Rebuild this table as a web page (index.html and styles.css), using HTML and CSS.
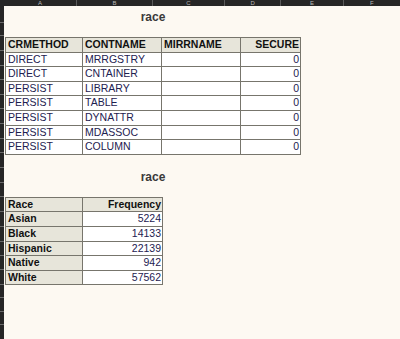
FILE: index.html
```html
<!DOCTYPE html>
<html>
<head>
<meta charset="utf-8">
<link rel="stylesheet" href="styles.css">
</head>
<body>
<div class="sheet">
  <div class="corner"></div>
  <div class="colhead">
    <div class="col ca"><span>A</span></div>
    <div class="col cb"><span>B</span></div>
    <div class="col cc"><span>C</span></div>
    <div class="col cd"><span>D</span></div>
    <div class="col ce"><span>E</span></div>
    <div class="col cf"><span>F</span></div>
  </div>
  <div class="rowhead">
    <div class="r" style="height:16px"></div>
    <div class="r" style="height:12px"></div>
    <div class="r" style="height:14px"></div>
    <div class="r" style="height:14px"></div>
    <div class="r" style="height:13px"></div>
    <div class="r" style="height:14px"></div>
    <div class="r" style="height:13px"></div>
    <div class="r" style="height:14px"></div>
    <div class="r" style="height:14px"></div>
    <div class="r" style="height:13px"></div>
    <div class="r" style="height:14px"></div>
    <div class="r" style="height:14px"></div>
    <div class="r" style="height:13px"></div>
    <div class="r" style="height:14px"></div>
    <div class="r" style="height:14px"></div>
    <div class="r" style="height:14px"></div>
    <div class="r" style="height:13px"></div>
    <div class="r" style="height:13px"></div>
    <div class="r" style="height:14px"></div>
    <div class="r" style="height:12px"></div>
    <div class="r" style="height:13px"></div>
    <div class="r" style="height:12px"></div>
    <div class="r" style="height:14px"></div>
  </div>
  <div class="content">
    <div class="block first">
      <div class="title">race</div>
      <table class="t1">
        <colgroup><col style="width:77px"><col style="width:79px"><col style="width:79px"><col style="width:60px"></colgroup>
        <tr class="hdr"><th>CRMETHOD</th><th>CONTNAME</th><th>MIRRNAME</th><th class="num">SECURE</th></tr>
        <tr><td>DIRECT</td><td>MRRGSTRY</td><td></td><td class="num">0</td></tr>
        <tr><td>DIRECT</td><td>CNTAINER</td><td></td><td class="num">0</td></tr>
        <tr><td>PERSIST</td><td>LIBRARY</td><td></td><td class="num">0</td></tr>
        <tr><td>PERSIST</td><td>TABLE</td><td></td><td class="num">0</td></tr>
        <tr><td>PERSIST</td><td>DYNATTR</td><td></td><td class="num">0</td></tr>
        <tr><td>PERSIST</td><td>MDASSOC</td><td></td><td class="num">0</td></tr>
        <tr><td>PERSIST</td><td>COLUMN</td><td></td><td class="num">0</td></tr>
      </table>
    </div>
    <div class="block second">
      <div class="title">race</div>
      <table class="t2">
        <colgroup><col style="width:77px"><col style="width:80px"></colgroup>
        <tr class="hdr"><th>Race</th><th class="num">Frequency</th></tr>
        <tr><th>Asian</th><td class="num">5224</td></tr>
        <tr><th>Black</th><td class="num">14133</td></tr>
        <tr><th>Hispanic</th><td class="num">22139</td></tr>
        <tr><th>Native</th><td class="num">942</td></tr>
        <tr><th>White</th><td class="num">57562</td></tr>
      </table>
    </div>
  </div>
</div>
</body>
</html>
```

FILE: styles.css
```css
html, body {
  margin: 0;
  padding: 0;
  background: #fdf9f2;
}
.sheet {
  width: 400px;
  height: 339px;
  overflow: hidden;
  display: grid;
  grid-template-columns: 4px 1fr;
  grid-template-rows: 6px 1fr;
  font-family: "Liberation Sans", Arial, sans-serif;
}
.corner {
  background: #262626;
}
.colhead {
  display: flex;
  background: #262626;
  overflow: hidden;
}
.col {
  height: 6px;
  display: flex;
  justify-content: center;
  align-items: flex-end;
  border-right: 1px solid #5a5a5a;
  box-sizing: border-box;
  color: #b8b8b8;
  font-size: 6px;
  line-height: 6px;
}
.col span {
  display: block;
}
.ca { width: 78px; }
.cb { width: 81px; }
.cc { width: 77px; }
.cd { width: 60px; }
.ce { width: 67px; }
.cf { width: 60px; border-right: none; }
.rowhead {
  background: #262626;
  display: flex;
  flex-direction: column;
}
.r {
  flex: none;
  border-bottom: 1px solid #6a6a6a;
}
.content {
  padding-left: 1px;
  display: flex;
  flex-direction: column;
}
.block {
  width: 296px;
  display: flex;
  flex-direction: column;
}
.first { margin-top: 4px; }
.second { margin-top: 15px; }
.title {
  text-align: center;
  font-weight: bold;
  font-size: 12px;
  line-height: 14px;
  color: #3a3a3a;
  margin-bottom: 13px;
}
table {
  border-collapse: collapse;
  table-layout: fixed;
  font-size: 10.5px;
}
.t1 { width: 296px; }
.t2 { width: 158px; }
th, td {
  border: 1.5px solid #77756c;
  padding: 0 1px 0 2px;
  height: 13.6px;
  line-height: 13.6px;
  white-space: nowrap;
  overflow: hidden;
  text-align: left;
}
th {
  background: #e7e5da;
  color: #111;
  font-weight: bold;
}
td {
  background: #fff;
  color: #1d2150;
}
.num {
  text-align: right;
}
```
